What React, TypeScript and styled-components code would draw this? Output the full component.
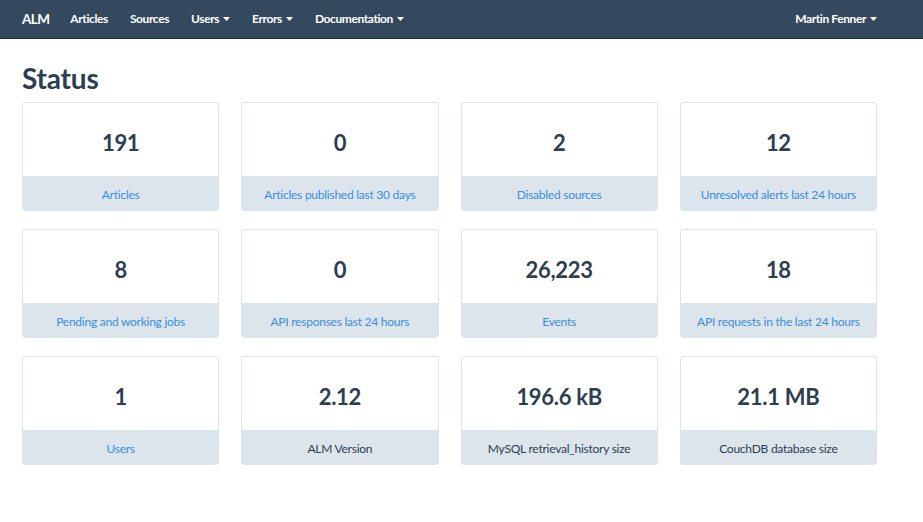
import React from "react";
import styled, { createGlobalStyle } from "styled-components";

const GlobalStyle = createGlobalStyle`
  body {
    margin: 0;
    background: #ffffff;
    font-family: Lato, "Open Sans", "Liberation Sans", sans-serif;
    color: #2c3e50;
  }
`;

type Stat = { value: string; label: string; link?: boolean };

const stats: Stat[] = [
  { value: "191", label: "Articles", link: true },
  { value: "0", label: "Articles published last 30 days", link: true },
  { value: "2", label: "Disabled sources", link: true },
  { value: "12", label: "Unresolved alerts last 24 hours", link: true },
  { value: "8", label: "Pending and working jobs", link: true },
  { value: "0", label: "API responses last 24 hours", link: true },
  { value: "26,223", label: "Events", link: true },
  { value: "18", label: "API requests in the last 24 hours", link: true },
  { value: "1", label: "Users", link: true },
  { value: "2.12", label: "ALM Version" },
  { value: "196.6 kB", label: "MySQL retrieval_history size" },
  { value: "21.1 MB", label: "CouchDB database size" },
];

function Caret() {
  return (
    <svg width="7" height="4" viewBox="0 0 7 4">
      <path d="M0 0h7L3.5 4z" fill="currentColor" />
    </svg>
  );
}

function App() {
  return (
    <>
      <GlobalStyle />
      <Navbar>
        <Brand>ALM</Brand>
        <NavItem>Articles</NavItem>
        <NavItem>Sources</NavItem>
        <NavItem>
          Users <Caret />
        </NavItem>
        <NavItem>
          Errors <Caret />
        </NavItem>
        <NavItem>
          Documentation <Caret />
        </NavItem>
        <NavRight>
          Martin Fenner <Caret />
        </NavRight>
      </Navbar>
      <Main>
        <Title>Status</Title>
        <Grid>
          {stats.map((s, i) => (
            <Card key={i}>
              <Value>{s.value}</Value>
              <Footer $link={s.link}>{s.label}</Footer>
            </Card>
          ))}
        </Grid>
      </Main>
    </>
  );
}

const Navbar = styled.nav`
  display: flex;
  align-items: center;
  height: 37px;
  padding: 0 46px 1px 22px;
  background-color: #34495e;
  border-bottom: 1px solid #1f2d3a;
  color: #ffffff;
`;

const Brand = styled.div`
  font-weight: 700;
  font-size: 13.5px;
  letter-spacing: -0.6px;
  margin-right: 21px;
`;

const NavItem = styled.div`
  display: flex;
  align-items: center;
  gap: 4px;
  font-weight: 700;
  font-size: 12px;
  letter-spacing: -0.4px;
  margin-right: 22px;
  cursor: pointer;
  svg {
    margin-top: 1px;
  }
`;

const NavRight = styled(NavItem)`
  margin-left: auto;
  margin-right: 0;
`;

const Main = styled.main`
  padding: 0 46px 0 22px;
`;

const Title = styled.h1`
  margin: 23px 0 8px;
  font-size: 28px;
  font-weight: 700;
  line-height: 32px;
  letter-spacing: -0.2px;
  color: #2c3e50;
`;

const Grid = styled.div`
  display: grid;
  grid-template-columns: repeat(4, 1fr);
  column-gap: 22px;
  row-gap: 18px;
`;

const Card = styled.div`
  display: flex;
  flex-direction: column;
  height: 109px;
  border: 1px solid #dce4ec;
  border-radius: 3px;
  overflow: hidden;
  box-sizing: border-box;
`;

const Value = styled.div`
  flex: 1;
  display: flex;
  align-items: center;
  justify-content: center;
  padding-top: 6px;
  font-size: 22px;
  font-weight: 700;
  letter-spacing: -0.3px;
  color: #2c3e50;
`;

const Footer = styled.div<{ $link?: boolean }>`
  height: 34px;
  display: flex;
  align-items: center;
  justify-content: center;
  padding-top: 3px;
  box-sizing: border-box;
  background-color: #dce4ec;
  font-size: 12px;
  letter-spacing: -0.25px;
  color: ${(p) => (p.$link ? "#3a8fdc" : "#2c3e50")};
`;

export default App;
